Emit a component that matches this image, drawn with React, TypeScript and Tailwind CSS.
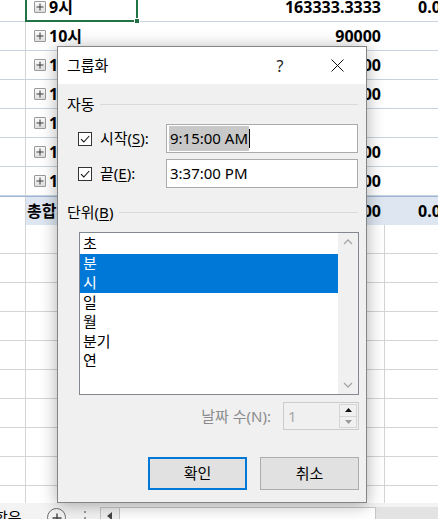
import React from 'react'

// Pivot rows behind the dialog
const pivotRows = [
  { label: '9시', value: '163333.3333', extra: '0.00' },
  { label: '10시', value: '90000' },
  { label: '11시', value: '120000' },
  { label: '12시', value: '110000' },
  { label: '13시', value: '' },
  { label: '14시', value: '100000' },
  { label: '15시', value: '130000' },
]

const units = ['초', '분', '시', '일', '월', '분기', '연']
const selectedUnits = ['분', '시']

function PlusBox() {
  return (
    <span className="flex h-[12px] w-[12px] shrink-0 items-center justify-center rounded-[1px] border border-[#9a9a9a] bg-gradient-to-b from-[#fafafa] to-[#dedede]">
      <svg width="8" height="8" viewBox="0 0 8 8" aria-hidden="true">
        <path d="M4 0.5V7.5M0.5 4H7.5" stroke="#3c3c3c" strokeWidth="1" />
      </svg>
    </span>
  )
}

function CheckBox() {
  return (
    <span className="flex h-[14px] w-[14px] shrink-0 items-center justify-center border border-[#333333] bg-white">
      <svg width="12" height="12" viewBox="0 0 12 12" aria-hidden="true">
        <path d="M2 6.2L4.8 9L10.2 3" fill="none" stroke="#111" strokeWidth="1.1" />
      </svg>
    </span>
  )
}

function Chevron({ down = false }: { down?: boolean }) {
  return (
    <svg width="10" height="6" viewBox="0 0 10 6" aria-hidden="true">
      <path
        d={down ? 'M1 1L5 5L9 1' : 'M1 5L5 1L9 5'}
        fill="none"
        stroke="#a6a6a6"
        strokeWidth="1.3"
      />
    </svg>
  )
}

function Sheet() {
  return (
    <div className="h-[503px] overflow-hidden">
      <div className="-mt-[7px]">
        {pivotRows.map((r, i) => (
          <div
            key={r.label}
            className="grid h-[29px] grid-cols-[26px_111px_248px_1fr] border-b border-[#c9d3df] text-[16px] font-bold leading-none text-black"
          >
            <div className="border-r border-[#d4d4d4]" />
            <div className="relative flex items-center gap-[3px] pl-[8px]">
              <PlusBox />
              <span>{r.label}</span>
              {i === 0 && (
                <div className="absolute -left-[1px] -top-[1px] h-[30px] w-[113px] border-2 border-[#217346]">
                  <span className="absolute -bottom-[4px] -right-[4px] h-[6px] w-[6px] border border-white bg-[#217346]" />
                </div>
              )}
            </div>
            <div className="flex items-center justify-end pr-[4px]">{r.value}</div>
            <div className="flex items-center overflow-hidden whitespace-nowrap pl-[33px]">{r.extra}</div>
          </div>
        ))}
        <div className="grid h-[29px] grid-cols-[26px_111px_248px_1fr] border-t border-[#9db6d6] text-[16px] font-bold leading-none text-black">
          <div className="border-r border-[#d4d4d4] bg-white" />
          <div className="flex items-center bg-[#dde6f1] pl-[1px]">총합계</div>
          <div className="flex items-center justify-end bg-[#dde6f1] pr-[4px]">913333.3300</div>
          <div className="flex items-center overflow-hidden whitespace-nowrap bg-[#dde6f1] pl-[33px]">0.00</div>
        </div>
        {Array.from({ length: 10 }).map((_, i) => (
          <div key={i} className="grid h-[29px] grid-cols-[26px_111px_248px_1fr] border-b border-[#d4d4d4]">
            <div className="border-r border-[#d4d4d4]" />
            <div />
            <div className="border-r border-[#d4d4d4]" />
            <div />
          </div>
        ))}
      </div>
    </div>
  )
}

function TabBar() {
  return (
    <div className="h-[16px] overflow-hidden bg-[#f3f3f3]">
      <div className="flex h-[29px] items-center text-[15px] leading-none text-black">
        <span className="-ml-[6px] w-[32px] shrink-0 whitespace-nowrap">합은</span>
        <span className="mt-[10px] flex w-[16px] shrink-0 gap-[2px] pl-[1px]">
          <span className="h-[2px] w-[2px] bg-[#217346]" />
          <span className="h-[2px] w-[2px] bg-[#217346]" />
          <span className="h-[2px] w-[2px] bg-[#217346]" />
        </span>
        <span className="ml-[5px] flex h-[19px] w-[19px] shrink-0 items-center justify-center rounded-full border border-[#6d6d6d]">
          <svg width="10" height="10" viewBox="0 0 10 10" aria-hidden="true">
            <path d="M5 0.5V9.5M0.5 5H9.5" stroke="#444" strokeWidth="1.4" />
          </svg>
        </span>
        <span className="ml-[18px] flex w-[4px] shrink-0 flex-col gap-[4px]">
          <span className="h-[2px] w-[2px] bg-[#9a9a9a]" />
          <span className="h-[2px] w-[2px] bg-[#9a9a9a]" />
          <span className="h-[2px] w-[2px] bg-[#9a9a9a]" />
        </span>
        <div className="ml-[12px] flex h-[29px] flex-1 items-stretch pt-[4px]">
          <span className="flex w-[20px] shrink-0 items-start justify-center border border-[#c6c6c6] bg-[#f0f0f0] pt-[4px]">
            <svg width="6" height="8" viewBox="0 0 6 8" aria-hidden="true">
              <path d="M5 0L0 4L5 8Z" fill="#444" />
            </svg>
          </span>
          <span className="w-[256px] shrink-0 border-y border-r border-[#c6c6c6] bg-white" />
          <span className="flex-1 bg-[#e3e3e3]" />
        </div>
      </div>
    </div>
  )
}

function GroupDialog() {
  return (
    <div className="absolute left-[57px] top-[46px] flex h-[457px] w-[310px] flex-col border border-[#858585] bg-[#f0f0f0] text-[15px] leading-none text-black shadow-[0_2px_16px_rgba(0,0,0,0.32)]">
      <div className="flex h-[37px] shrink-0 items-center bg-white pl-[9px] pr-[14px]">
        <span>그룹화</span>
        <span className="ml-auto flex w-[30px] justify-center text-[16px] text-[#222]">?</span>
        <span className="ml-[27px] flex w-[30px] justify-center">
          <svg width="13" height="13" viewBox="0 0 13 13" aria-hidden="true">
            <path d="M0.5 0.5L12.5 12.5M12.5 0.5L0.5 12.5" stroke="#111" strokeWidth="1" />
          </svg>
        </span>
      </div>

      <div className="flex flex-col pl-[9px] pr-[8px]">
        <div className="mt-[10px] flex h-[20px] items-center">
          <span>자동</span>
          <span className="ml-[5px] h-px flex-1 bg-[#dadada]" />
        </div>

        <div className="mt-[10px] flex h-[29px] items-center pl-[11px]">
          <CheckBox />
          <span className="ml-[8px] w-[66px] shrink-0">
            시작(<span className="underline underline-offset-2">S</span>):
          </span>
          <div className="flex h-[29px] w-[192px] shrink-0 items-center border border-[#ababab] bg-white pl-[2px]">
            <span className="bg-[#c8c8c8] px-[1px] py-[5px]">9:15:00 AM</span>
            <span className="h-[19px] w-px bg-black" />
          </div>
        </div>

        <div className="mt-[6px] flex h-[29px] items-center pl-[11px]">
          <CheckBox />
          <span className="ml-[8px] w-[66px] shrink-0">
            끝(<span className="underline underline-offset-2">E</span>):
          </span>
          <div className="flex h-[29px] w-[192px] shrink-0 items-center border border-[#ababab] bg-white pl-[3px]">
            3:37:00 PM
          </div>
        </div>

        <div className="mt-[14px] flex h-[20px] items-center">
          <span>
            단위(<span className="underline underline-offset-2">B</span>)
          </span>
          <span className="ml-[6px] h-px flex-1 bg-[#dadada]" />
        </div>

        <div className="ml-[12px] mt-[10px] flex h-[163px] w-[280px] shrink-0 border border-[#828790] bg-white">
          <ul className="flex-1 pt-[1px]">
            {units.map((u) => {
              const sel = selectedUnits.includes(u)
              return (
                <li
                  key={u}
                  className={
                    sel
                      ? 'flex h-[19.5px] items-center bg-[#0078d7] pl-[3px] text-white'
                      : 'flex h-[19.5px] items-center pl-[3px]'
                  }
                >
                  {u}
                </li>
              )
            })}
          </ul>
          <div className="flex w-[20px] flex-col items-center justify-between bg-[#f0f0f0] py-[6px]">
            <Chevron />
            <Chevron down />
          </div>
        </div>

        <div className="-mr-[1px] mt-[7px] flex h-[28px] items-center justify-end">
          <span className="mr-[12px] text-[#8c8c8c]">날짜 수(N):</span>
          <div className="flex h-[28px] w-[76px] items-stretch border border-[#cccccc] bg-[#f0f0f0]">
            <span className="flex flex-1 items-center pl-[4px] text-[#a8a8a8]">1</span>
            <div className="my-[1px] mr-[1px] flex w-[18px] flex-col">
              <span className="flex flex-1 items-center justify-center border border-[#d6d6d6] bg-[#f0f0f0]">
                <svg width="7" height="4" viewBox="0 0 7 4" aria-hidden="true">
                  <path d="M0 4L3.5 0L7 4Z" fill="#111" />
                </svg>
              </span>
              <span className="flex flex-1 items-center justify-center border border-t-0 border-[#d6d6d6] bg-[#f0f0f0]">
                <svg width="7" height="4" viewBox="0 0 7 4" aria-hidden="true">
                  <path d="M0 0L3.5 4L7 0Z" fill="#9a9a9a" />
                </svg>
              </span>
            </div>
          </div>
        </div>

        <div className="-mr-[1px] mt-[27px] flex justify-end gap-[13px]">
          <button className="flex h-[33px] w-[99px] items-center justify-center border-2 border-[#0078d7] bg-[#e1e1e1]">
            확인
          </button>
          <button className="flex h-[33px] w-[99px] items-center justify-center border border-[#adadad] bg-[#e1e1e1]">
            취소
          </button>
        </div>
      </div>
    </div>
  )
}

export default function App() {
  return (
    <div className="relative flex h-[519px] w-[438px] flex-col overflow-hidden bg-white font-['Noto_Sans','Noto_Sans_CJK_KR',sans-serif]">
      <Sheet />
      <TabBar />
      <GroupDialog />
    </div>
  )
}
